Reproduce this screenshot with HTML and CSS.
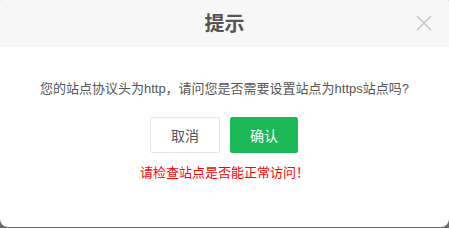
FILE: index.html
```html
<!DOCTYPE html>
<html lang="zh">
<head>
<meta charset="utf-8">
<link rel="stylesheet" href="styles.css">
</head>
<body>
<div class="dialog">
  <div class="header">
    <span class="title">提示</span>
    <svg class="close" width="16" height="16" viewBox="0 0 16 16"><path d="M1 1L15 15M15 1L1 15" stroke="#c9c9c9" stroke-width="1.6" fill="none"/></svg>
  </div>
  <div class="content">
    <p class="msg">您的站点协议头为http，请问您是否需要设置站点为https站点吗?</p>
    <div class="actions">
      <button class="btn btn-cancel">取消</button>
      <button class="btn btn-ok">确认</button>
    </div>
    <p class="warn">请检查站点是否能正常访问！</p>
  </div>
</div>
</body>
</html>
```
FILE: styles.css
```css
html, body {
  margin: 0;
  padding: 0;
  background: #6b6b6b;
  height: 228px;
  overflow: hidden;
  font-family: "Liberation Sans", "Noto Sans CJK SC", sans-serif;
}
.dialog {
  margin-top: -5px;
  height: 232px;
  background: #fff;
  border-radius: 8px;
  overflow: hidden;
}
.header {
  position: relative;
  height: 52px;
  padding-top: 5px;
  box-sizing: border-box;
  background: #f7f7f7;
  display: flex;
  align-items: center;
  justify-content: center;
}
.title {
  font-size: 20px;
  font-weight: bold;
  color: #555;
  line-height: 24px;
}
.close {
  position: absolute;
  right: 17px;
  top: 20px;
}
.content {
  padding-top: 32px;
  text-align: center;
  text-spacing-trim: space-all;
}
.msg {
  margin: 0;
  font-size: 13px;
  line-height: 20px;
  color: #555;
}
.actions {
  margin-top: 18px;
  padding-right: 1px;
  display: flex;
  justify-content: center;
  gap: 10px;
}
.btn {
  height: 36px;
  border-radius: 2px;
  font-size: 14px;
  font-family: inherit;
  padding: 0;
  cursor: pointer;
}
.btn-cancel {
  width: 70px;
  background: #fff;
  border: 1px solid #e6e6e6;
  color: #555;
}
.btn-ok {
  width: 68px;
  background: #1cb95a;
  border: 1px solid #1cb95a;
  color: #fff;
}
.warn {
  margin: 10px 0 0;
  font-size: 13px;
  line-height: 20px;
  color: #ff0000;
}
```
